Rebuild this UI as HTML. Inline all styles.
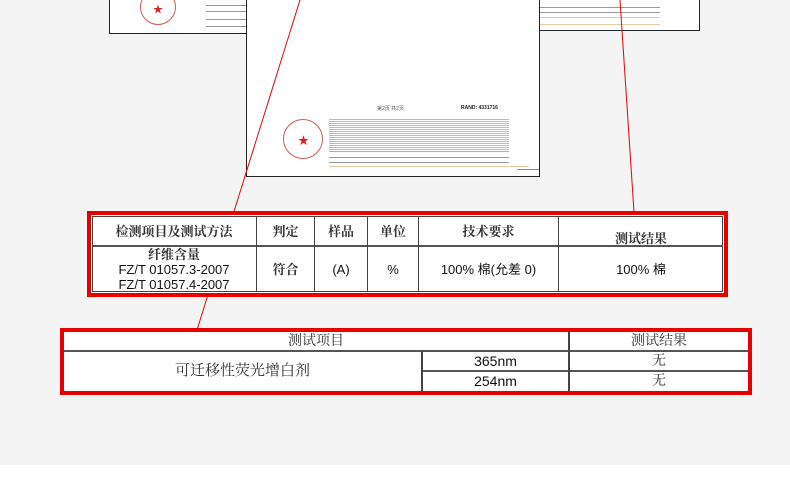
<!DOCTYPE html>
<html><head><meta charset="utf-8"><style>
*{margin:0;padding:0;box-sizing:border-box}
body{width:790px;height:480px;background:#fff;position:relative;overflow:hidden;font-family:"Liberation Sans","Noto Sans CJK SC",sans-serif}
.bg{position:absolute;left:0;top:0;width:790px;height:465px;background:#f4f4f4}
.doc{position:absolute;background:#fff;border:1px solid #222}
.a{position:absolute}
.t{position:absolute;font-size:13px;color:#111;text-align:center;display:flex;align-items:center;justify-content:center;line-height:15px}
.ser{font-family:"Liberation Serif","Noto Serif CJK SC",serif;color:#333;font-weight:bold}
.vl{position:absolute;background:#444;width:1px}
.hl{position:absolute;background:#555;height:2px}
.txt{position:absolute;height:1px;background:#999}
</style></head><body>
<div class="bg"></div>
<div class="doc" style="left:109px;top:-2px;width:138px;height:36px">
 <div class="a" style="left:30px;top:-10px;width:36px;height:36px;border:1px solid #d55;border-radius:50%"></div>
 <div class="a" style="left:43px;top:2px;color:#d22;font-size:10px">★</div>
 <div class="txt" style="left:96px;top:6px;width:40px"></div>
 <div class="txt" style="left:96px;top:12px;width:40px"></div>
 <div class="txt" style="left:96px;top:20px;width:40px"></div>
 <div class="txt" style="left:96px;top:27px;width:40px"></div>
</div>
<div class="doc" style="left:537px;top:-2px;width:163px;height:33px">
 <div class="txt" style="left:2px;top:8px;width:120px"></div>
 <div class="txt" style="left:2px;top:13px;width:120px"></div>
 <div class="txt" style="left:2px;top:18px;width:120px;background:#dca"></div>
 <div class="txt" style="left:2px;top:25px;width:120px;background:#e9c9a8"></div>
</div>
<div class="doc" style="left:246px;top:-2px;width:294px;height:179px">
 <div class="a" style="left:130px;top:106px;font-size:5px;color:#555">第2页 共2页</div>
 <div class="a" style="left:214px;top:106px;font-size:5px;color:#222;font-weight:bold">RAND: 4331716</div>
 <div class="a" style="left:36px;top:120px;width:40px;height:40px;border:1px solid #d55;border-radius:50%"></div>
 <div class="a" style="left:51px;top:133px;color:#d22;font-size:11px">★</div>
 <div class="a" style="left:82px;top:119px;width:180px;height:32px;background:repeating-linear-gradient(#fff 0,#fff 1px,#bbb 1px,#bbb 2px)"></div>
 <div class="txt" style="left:82px;top:152px;width:180px;background:#e0a070"></div>
 <div class="txt" style="left:82px;top:158px;width:180px"></div>
 <div class="txt" style="left:82px;top:163px;width:180px"></div>
 <div class="txt" style="left:82px;top:167px;width:200px;background:#e9c9a8"></div>
 <div class="a" style="left:270px;top:170px;width:22px;height:1px;background:#888"></div>
</div>
<svg class="a" style="left:0;top:0" width="790" height="480"><line x1="300" y1="0" x2="197" y2="330" stroke="#e00" stroke-width="1"/><line x1="620" y1="0" x2="634" y2="212" stroke="#e00" stroke-width="1"/></svg>
<div class="a" style="left:87px;top:211px;width:641px;height:86px;border:4px solid #e60000;background:#fff"></div>
<div class="a" style="left:92px;top:216px;width:631px;height:76px;border:1px solid #444"></div>
<div class="hl" style="left:92px;top:245px;width:631px"></div>
<div class="vl" style="left:256px;top:216px;height:76px"></div>
<div class="vl" style="left:314px;top:216px;height:76px"></div>
<div class="vl" style="left:367px;top:216px;height:76px"></div>
<div class="vl" style="left:418px;top:216px;height:76px"></div>
<div class="vl" style="left:558px;top:216px;height:76px"></div>
<div class="t ser" style="left:92px;top:217px;width:164px;height:28px">检测项目及测试方法</div>
<div class="t ser" style="left:257px;top:217px;width:57px;height:28px">判定</div>
<div class="t ser" style="left:315px;top:217px;width:52px;height:28px">样品</div>
<div class="t ser" style="left:368px;top:217px;width:50px;height:28px">单位</div>
<div class="t ser" style="left:419px;top:217px;width:139px;height:28px">技术要求</div>
<div class="t ser" style="left:559px;top:224px;width:164px;height:28px">测试结果</div>
<div class="t" style="left:92px;top:247px;width:164px;height:45px;flex-direction:column"><span class="ser">纤维含量</span><span>FZ/T 01057.3-2007</span><span>FZ/T 01057.4-2007</span></div>
<div class="t ser" style="left:257px;top:247px;width:57px;height:45px">符合</div>
<div class="t" style="left:315px;top:247px;width:52px;height:45px">(A)</div>
<div class="t" style="left:368px;top:247px;width:50px;height:45px">%</div>
<div class="t" style="left:419px;top:247px;width:139px;height:45px">100% 棉(允差 0)</div>
<div class="t" style="left:559px;top:247px;width:164px;height:45px">100% 棉</div>
<div class="a" style="left:60px;top:328px;width:692px;height:67px;border:4px solid #e60000;background:#fff"></div>
<div class="hl" style="left:64px;top:350px;width:684px"></div>
<div class="a" style="left:422px;top:370px;width:326px;height:2px;background:#555"></div>
<div class="vl" style="left:568px;top:332px;height:59px;width:2px"></div>
<div class="vl" style="left:421px;top:351px;height:40px;width:2px"></div>
<div class="t ser" style="left:64px;top:332px;width:504px;height:18px;font-size:14px;font-weight:normal">测试项目</div>
<div class="t ser" style="left:570px;top:332px;width:178px;height:18px;font-size:14px;font-weight:normal">测试结果</div>
<div class="t ser" style="left:64px;top:352px;width:357px;height:39px;font-size:15px;font-weight:normal">可迁移性荧光增白剂</div>
<div class="t" style="left:423px;top:352px;width:145px;height:18px;font-size:14px">365nm</div>
<div class="t" style="left:423px;top:372px;width:145px;height:19px;font-size:14px">254nm</div>
<div class="t ser" style="left:570px;top:352px;width:178px;height:18px;font-size:14px;font-weight:normal">无</div>
<div class="t ser" style="left:570px;top:372px;width:178px;height:19px;font-size:14px;font-weight:normal">无</div>
</body></html>
